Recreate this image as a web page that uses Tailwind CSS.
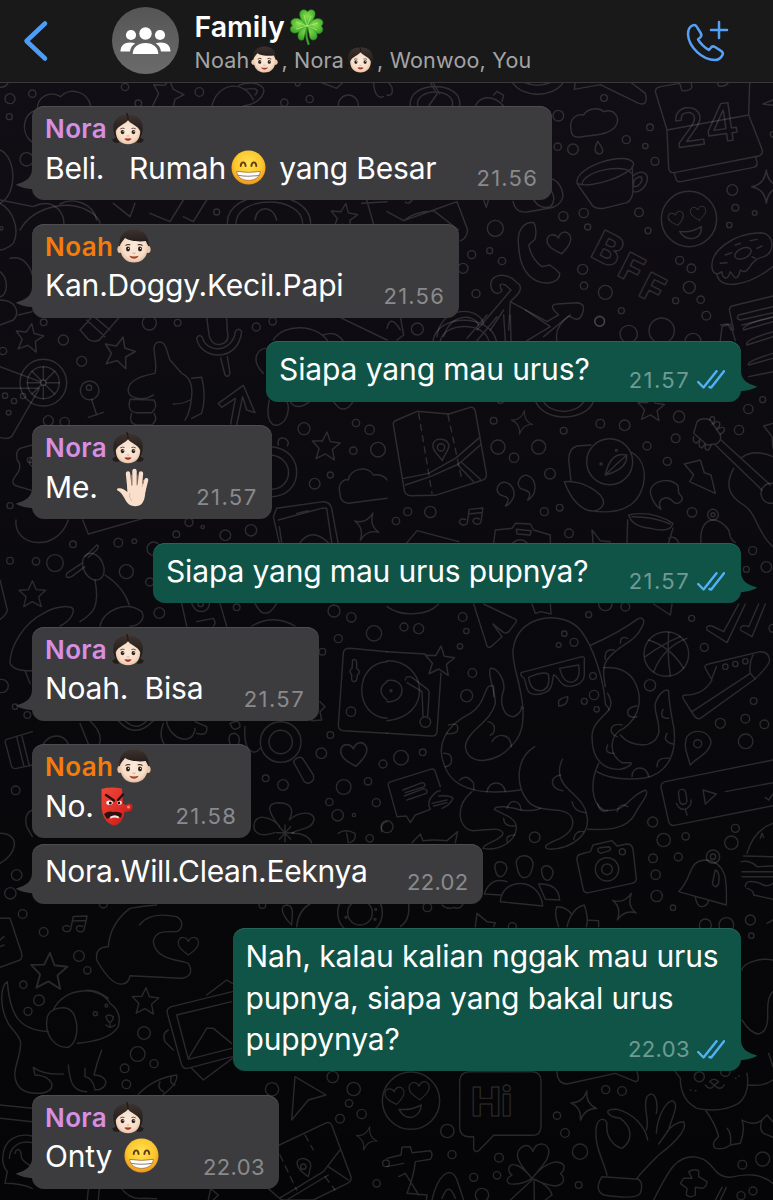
<!DOCTYPE html>
<html lang="id">
<head>
  <meta charset="UTF-8">
  <meta name="viewport" content="width=device-width, initial-scale=1.0">
  <title>Family</title>
  <script src="https://cdn.jsdelivr.net/npm/@tailwindcss/browser@4"></script>
</head>
<body class="bg-[#0b0a0e] font-['Inter',sans-serif] text-white">

<!-- shared shapes -->
<svg class="absolute w-0 h-0" aria-hidden="true">
  <defs>
    <radialGradient id="skin" cx=".5" cy=".45" r=".6">
      <stop offset="0" stop-color="#fdebdc"/><stop offset=".7" stop-color="#f7dcc6"/><stop offset="1" stop-color="#dcb496"/>
    </radialGradient>
    <linearGradient id="hair" x1="0" y1="0" x2="0" y2="1">
      <stop offset="0" stop-color="#3d332f"/><stop offset="1" stop-color="#1c1715"/>
    </linearGradient>
    <radialGradient id="yellow" cx=".5" cy=".4" r=".62">
      <stop offset="0" stop-color="#ffe454"/><stop offset=".65" stop-color="#fdc62d"/><stop offset="1" stop-color="#ee8d12"/>
    </radialGradient>
    <linearGradient id="red" x1="0" y1="0" x2="1" y2="1">
      <stop offset="0" stop-color="#f0493a"/><stop offset=".6" stop-color="#dc2a24"/><stop offset="1" stop-color="#a81a1a"/>
    </linearGradient>
    <radialGradient id="leaf" cx=".5" cy=".4" r=".7">
      <stop offset="0" stop-color="#8be04a"/><stop offset="1" stop-color="#2f9e27"/>
    </radialGradient>

    <symbol id="boy" viewBox="0 0 34 34">
      <ellipse cx="2.8" cy="20.5" rx="2.4" ry="3.4" fill="#ecc7ab"/>
      <ellipse cx="31.2" cy="20.5" rx="2.4" ry="3.4" fill="#ecc7ab"/>
      <path d="M3 17C3 7 9 3 17 3s14 4 14 14c0 10-5 16.500-14 16.500S3 27 3 17Z" fill="url(#skin)"/>
      <path d="M2.600 17C1.500 7 7 .5 17 .5S32.500 7 31.400 17c-1-1.500-1.800-3-2.600-5C22 13 12 12 8 9 6.500 11.500 4 13 2.600 17Z" fill="url(#hair)"/>
      <path d="M8.500 16.600q2.500-1.800 4.800-.5M20.700 16.100q2.300-1.300 4.800.5" stroke="#3a2c25" stroke-width="1.100" fill="none"/>
      <ellipse cx="11" cy="20" rx="2" ry="2.400" fill="#2b1f1a"/><ellipse cx="23" cy="20" rx="2" ry="2.400" fill="#2b1f1a"/>
      <circle cx="11.500" cy="19.300" r=".6" fill="#fff"/><circle cx="23.500" cy="19.300" r=".6" fill="#fff"/>
      <path d="M15.500 24q1.500.9 3 0" stroke="#d8a888" stroke-width="1" fill="none"/>
      <path d="M12.300 26.800q4.700 1.300 9.400 0-1.400 3-4.700 3t-4.700-3Z" fill="#a83f2c"/>
    </symbol>

    <symbol id="girl" viewBox="0 0 34 34">
      <path d="M6 22c-2 4-4 6-5.500 5.500C0 30 3 32.500 7.500 31.500ZM28 22c2 4 4 6 5.500 5.500C34 30 31 32.500 26.500 31.500Z" fill="#231c1a"/>
      <path d="M1.500 19C0 8 6 1.500 17 1.500S34 8 32.500 19q-.8 5-3 7.500H4.500q-2.200-2.500-3-7.500Z" fill="url(#hair)"/>
      <path d="M17 7.500c2.500 4.500 10.500 5.500 13 12 0 8.500-5 13.800-13 13.800S4 28 4 19.500C6.500 13 14.500 12 17 7.500Z" fill="url(#skin)"/>
      <path d="M15.500 0q1.800 2 1.500 8" stroke="#1b1513" stroke-width="1.200" fill="none"/>
      <path d="M8.800 16.900q2.300-1.400 4.500-.4M20.700 16.500q2.200-1 4.500.4" stroke="#4a372d" stroke-width=".9" fill="none"/>
      <ellipse cx="11.200" cy="20.300" rx="2" ry="2.300" fill="#2b1f1a"/><ellipse cx="22.800" cy="20.300" rx="2" ry="2.300" fill="#2b1f1a"/>
      <circle cx="11.800" cy="19.500" r=".6" fill="#fff"/><circle cx="23.400" cy="19.500" r=".6" fill="#fff"/>
      <path d="M15.700 24.200q1.300.8 2.600 0" stroke="#d8a888" stroke-width="1" fill="none"/>
      <path d="M13 27.400q2-1 4-.3 2-.7 4 .3-1.400 2.300-4 2.300t-4-2.300Z" fill="#a8362a"/>
    </symbol>

    <symbol id="grin" viewBox="0 0 36 36">
      <circle cx="18" cy="18" r="17.500" fill="url(#yellow)"/>
      <path d="M10 16.500c.3-5 4.700-5 5 0M21 16.500c.3-5 4.700-5 5 0" stroke="#6b3c12" stroke-width="2" stroke-linecap="round" fill="none"/>
      <path d="M5.800 22q12.200 2 24.400 0C29.800 27.500 25 31.300 18 31.300S6.200 27.500 5.800 22Z" fill="#fff" stroke="#a8743a" stroke-width=".9"/>
      <path d="M7 26q11 2 22 0" stroke="#8a7f76" stroke-width="1.100" fill="none"/>
    </symbol>

    <symbol id="hand" viewBox="0 0 33 39">
      <g stroke="#fae0cc" stroke-linecap="round" fill="none">
        <path d="M13.500 20 12 5.500" stroke-width="4.400"/>
        <path d="M18.500 20V3" stroke-width="4.400"/>
        <path d="M23.500 20 25 5.500" stroke-width="4.400"/>
        <path d="M27.500 23 30.300 12" stroke-width="4"/>
      </g>
      <path d="M11.300 18v6C8 21 5 19.500 1.500 20.500.5 21.500 1 22.500 2.500 23c4 2 6 8.500 9.500 12.500 3.500 3.500 11 3.500 14 0 3-4 3-8 3.600-14L27 16Z" fill="#fae0cc"/>
      <path d="M15.800 18V7M21 18V7M26 19l1.500-7M14 25q-2 4 2 8" stroke="#d9ab8c" stroke-width=".8" fill="none"/>
    </symbol>

    <symbol id="goblin" viewBox="0 0 33 39">
      <path d="M1.500 2Q11-.5 22 1.500L23 17l3 1c5-3 7 0 6.500 3s-4 4.500-8 3.500C24 32 20 38 13.500 38.500 7 36.500 2 30 1.500 20Z" fill="url(#red)"/>
      <path d="M6 8l8 5.500M23 7.500l-5 5.500" stroke="#2c0f0d" stroke-width="2.400" stroke-linecap="round"/>
      <ellipse cx="9.500" cy="15.800" rx="3.200" ry="2.200" fill="#fff"/><ellipse cx="19.500" cy="15.800" rx="2.300" ry="2" fill="#fff"/>
      <circle cx="10.300" cy="15.900" r="1.500" fill="#1b1010"/><circle cx="19" cy="15.900" r="1.300" fill="#1b1010"/>
      <path d="M4 27q5-3.500 9-2 5-1 9 1.500l-1 4q-8-3-14 1.500Z" fill="#2b1110"/>
      <path d="M10 29.800q5-3 9 0l-.4 1.700q-4.600-2-8 .2Z" fill="#f3e9e2"/>
      <circle cx="28.500" cy="20" r="1.500" fill="#ff8274"/>
    </symbol>

    <symbol id="clover" viewBox="0 0 34 36">
      <path d="M17 17q-2 10 1.500 18" stroke="#3c9a2c" stroke-width="2.200" stroke-linecap="round" fill="none"/>
      <g fill="url(#leaf)" stroke="#2f9527" stroke-width=".6">
        <path d="M17 17C11 12 9 7 10 3.500 12-.5 16 .5 17.500 3c2-3 7-3 7.500 1 .5 4-3 9-8 13Z"/>
        <path d="M17 17c4-6 9-8 13-7 4 1.500 3.500 5.500 1 7 3 2.500 2 7-2 7.500-4 0-9-3-12-7.500Z"/>
        <path d="M17 17c-4-6-8-8-12-7.500-4.500 1-5 5-2.500 7-3.500 2.500-2.500 7 1.500 7.500 4 0 9-2.500 13-7Z"/>
        <path d="M17 17c-6 2-9 6-9 10 0 4 3 5 5.500 3.500L17 17c3 8 2 12 4.500 13.500 3.500 1.500 6-1 5.500-4.500-.5-4-4-7-10-9Z"/>
      </g>
      <path d="M17 17 14 6M17 17l4-10M17 17 28 14M17 17l10 4M17 17 6 13M17 17 6 20" stroke="#b5f07c" stroke-width=".7"/>
    </symbol>

    <symbol id="ticks" viewBox="0 0 28 19">
      <path d="M1.200 12 6.500 17.500 19.500 1.200M12.500 17 14.200 17.500 27 1.200" fill="none" stroke="#53b0f6" stroke-width="2.400" stroke-linecap="round" stroke-linejoin="round"/>
    </symbol>
    <symbol id="tail" viewBox="0 0 27 31">
      <path d="M27 0H16C16 9 9 13 .6 15.200 0 15.500 0 16 .6 16.300 5 18.500 11 19.800 16.500 20.300 18 26 22 30 27 30.500Z"/>
    </symbol>

    <path id="star" d="M0-42 12-14 42-12 20 9 28 40 0 24-27 40-20 9-42-12-12-14Z"/>
    <path id="spark" d="M0-45Q5-6 40 0 5 6 0 45-5 6-40 0-5-6 0-45Z"/>
    <path id="heart" d="M0 32C-22 16-42 0-34-20-26-36-6-32 0-16 6-32 26-36 34-20 42 0 22 16 0 32Z"/>
    <path id="note" d="M-14 22V-18L26-28V14M-14-4 26-14M-14 22a12 9 0 1 1-6-8M26 14a12 9 0 1 1-6-8"/>
  </defs>
</svg>

<div class="relative w-[773px] h-[1200px] overflow-hidden">

  <!-- wallpaper -->
  <svg id="wallpaper" class="absolute inset-0 bg-linear-to-b from-[#120f16] via-[#0a090d] to-[#050507]" width="773" height="1200" viewBox="0 0 773 1200"
       fill="none" stroke="#fff" stroke-opacity=".14" stroke-width="4.300" stroke-linejoin="round" stroke-linecap="round">

    <g transform="scale(.33333)">
      <path d="M95 425C62 400 65 340 112 330 110 290 150 270 182 290 205 262 262 270 272 318"/>
      <path d="M458 318 476 280 461 254 494 256 508 240 520 268 552 284 525 298 520 318"/>
      <path d="M636 318C650 250 730 235 760 300M716 256C760 240 800 255 790 280 780 305 750 315 730 318M735 268C770 262 780 270 765 285"/>
      <path d="M0 450C48 470 55 580 0 610M0 600 100 620C160 590 200 640 190 680M180 612C220 590 280 610 290 660"/>
      <path d="M0 262Q20 262 25 246M960 246 1010 265 1030 246M1120 246Q1125 300 1150 290"/>
    </g>

    <g transform="translate(387 0) scale(.33333)">
      <path d="M0 285Q20 290 15 262L5 248M70 318C60 240 230 240 218 318M92 318C82 262 208 262 196 318M130 248 150 282 125 318M138 248 158 282"/>
      <path d="M265 318C280 285 320 285 350 318M320 285 330 274 350 286 345 304M375 246C405 295 500 295 530 246M410 246Q450 265 495 246"/>
      <path d="M565 246 562 268 640 254 755 310Q785 320 775 280L730 246"/>
      <path d="M552 388C545 355 570 340 590 345 600 325 635 320 650 335 680 325 700 350 688 375 670 410 600 405 575 412 560 412 552 405 552 388Z"/>
      <path d="M632 424Q615 458 636 462 660 460 632 424Z"/>
      <path d="M570 550C560 500 720 450 740 490 745 520 610 570 570 550L615 615Q625 628 650 625L720 608Q735 600 738 575L736 498M585 552C590 510 720 490 732 520M738 528C765 505 790 520 778 550 765 575 745 580 736 572M742 540Q765 520 765 540 755 565 738 558Z"/>
      <path d="M1088 246 1085 345 840 390 805 275Q805 262 820 260L878 250 885 272Q905 275 915 262L912 246M990 246 995 258Q1015 262 1025 246M840 390 845 505Q848 520 862 518L1115 468Q1130 462 1125 448L1085 345M862 520 868 540Q872 547 882 545L1100 502Q1112 498 1110 488L1106 470"/>
      <use href="#spark" transform="translate(1138 560) scale(1.100)"/>
      <path d="M1158 300 1128 312 1158 316"/>
      <circle cx="906" cy="657" r="83"/>
      <use href="#heart" transform="translate(868 656) rotate(-14) scale(.65)"/>
      <use href="#heart" transform="translate(934 640) rotate(-8) scale(.65)"/>
      <path d="M878 694Q910 700 943 680 945 712 915 716 890 716 878 694Z"/>
      <path d="M395 740C388 690 410 665 440 668 448 680 448 700 444 718L425 735C430 765 450 790 465 800L488 795Q505 805 518 820C520 845 485 855 455 845 415 830 398 790 395 740Z"/>
      <use href="#heart" transform="translate(518 730) rotate(-12)"/>
      <path d="M0 635 50 662 140 630 210 605 242 690Q240 715 220 722M50 662Q80 635 140 632L215 690M55 606Q65 615 75 600M290 600 298 622 304 600"/>
      <path d="M378 604Q385 640 420 636L485 625Q520 620 528 590 525 545 490 535M440 600Q460 630 490 620 510 600 492 570"/>
      <path d="M975 800C970 760 1030 700 1120 698 1165 700 1165 760 1130 770 1080 780 1090 830 1060 810 1050 850 1040 830 1030 815 1020 850 1005 830 1005 815 985 830 975 815 975 800ZM990 825C1000 870 1080 860 1158 800"/>
      <ellipse cx="1068" cy="760" rx="26" ry="15" transform="rotate(-25 1068 760)"/>
      <path d="M1015 765 1035 758M1000 790 1020 788M1045 735 1060 730M1090 722 1110 718M1110 745 1125 738M1095 770 1105 775"/>
      <path d="M315 870C300 830 340 815 375 835L398 855Q405 870 390 885L370 905 480 965 515 945 500 930Q490 912 510 912L570 908Q595 910 588 935 580 965 560 955L545 948 470 1010M315 870Q330 890 345 872 330 845 355 855L372 870 270 990M370 905 365 990M350 930 310 990"/>
      <path d="M150 1010C160 920 270 915 290 970M170 1010C190 940 260 940 275 975M0 985Q10 940 40 990"/>
      <path d="M1158 888 1035 918Q1025 922 1028 935L1040 990M1158 920 1055 945Q1045 955 1060 960L1158 938M1158 952 1065 975M1000 975 1022 972 1032 990"/>
    </g>

    <g transform="translate(0 200) scale(.33333)">
      <path d="M0 10C40 30 60 90 40 130 20 150 0 150 0 150M30 175C70 165 95 200 100 240M0 215C30 240 20 290 0 290M0 300C50 300 60 340 40 360L0 375M55 345 97 335"/>
      <path d="M60 90C100 20 200 0 260 30 300 50 300 70 300 70M340 10 390 50 405 10M450 40 510 65 550 0M550 50 580 65 620 0"/>
      <path d="M682 70C680-40 930-40 932 70M708 70C710-15 905-15 908 70M765 60C770 15 820 15 830 60"/>
      <use href="#star" transform="translate(1032 50) rotate(8) scale(.95)"/>
      <path d="M1100 0 1120 70M1085 10 1161 5"/>
      <path d="M240 390 275 352H330L358 352 300 418Q285 430 265 418ZM260 360 315 410M285 352 330 390"/>
      <use href="#star" transform="translate(88 412) rotate(10)"/>
      <use href="#star" transform="translate(358 456) rotate(14) scale(1.100)"/>
      <path d="M620 352 628 410Q640 440 665 432 690 425 682 395L680 352M590 415C600 480 715 490 725 395Q715 380 706 395C700 455 620 465 606 410Q595 402 590 415ZM662 474 675 525Q685 535 690 520L682 470"/>
      <path d="M465 520C475 480 450 440 470 428 500 415 500 460 510 480L545 520Q580 535 575 590 570 640 555 660M465 520Q380 535 385 575 390 600 440 595L460 585M390 600Q380 635 410 638H455Q475 620 462 600L390 598M395 640Q385 672 410 675H455Q475 660 462 640M575 535 605 532Q620 590 605 640L575 655M520 612Q550 612 570 600"/>
      <circle cx="130" cy="548" r="70"/><circle cx="130" cy="548" r="48"/><circle cx="130" cy="548" r="8"/>
      <path d="M130 500V540M130 556V596M82 548H122M138 548H178M96 514 124 542M136 554 164 582M164 514 136 542M124 554 96 582"/>
      <path d="M0 500 120 545M0 565H118L35 710Q20 720 0 712"/>
      <circle cx="269" cy="571" r="28"/><circle cx="267" cy="563" r="8"/><path d="M275 599 290 645M265 652 310 637"/>
      <path d="M655 610 730 556 765 638 740 630 728 590 710 675M655 610 665 622 706 595 692 672"/>
      <path d="M820 420C850 370 950 370 985 425M970 405Q1010 390 1030 425M790 520C750 480 770 440 810 445M808 600C795 660 815 680 835 675 865 665 870 620 860 604M870 604Q890 635 930 604M1000 604Q1030 650 1060 604M1020 352 1161 420"/>
      <use href="#star" transform="translate(978 738) rotate(4)"/>
      <path d="M815 740C920 750 910 890 815 890M815 765C885 775 880 865 815 868M835 735Q830 710 855 715 870 725 862 738"/>
      <path d="M1020 880C1010 850 1035 835 1045 840 1050 805 1105 795 1120 825 1150 820 1161 840 1161 840M1020 880Q1020 908 1045 910L1161 895"/>
      <path d="M820 950 830 925 970 905Q990 905 995 925L1020 1060M835 960 965 925 980 925 1000 1060M890 940 925 932M820 950 845 1060"/>
      <use href="#spark" transform="translate(1100 980) rotate(25)"/>
      <path d="M97 735 60 745Q45 755 52 780 70 800 45 830 30 850 50 858L97 872M97 770Q80 790 97 800"/>
    </g>

    <g transform="translate(387 320) scale(.33333)">
      <path d="M138 62C150-20 310-20 328 62M160 62C175 5 290 5 305 62M240 55 300-15M270 62 330-10M350-15 355 62M370-15 372 62M415-30 490 20 420 62M510 62Q500 20 550-15M30 60 50 45 40-10"/>
      <path d="M1000 62 1005 20 1030 12 1045 62M1158 5 1070 30Q1060 15 1158-10M1158 50 1080 75Q1070 60 1158 35M1158 115 1085 135Q1075 125 1158 100M1085 170 1158 155"/>
      <path d="M20 320Q15 305 30 300L90 274 185 282 250 262Q262 260 265 275L298 460Q300 475 288 480L145 526 70 527Q55 525 52 512ZM50 475 125 460 205 415 275 355M55 495 130 470 215 432 280 375M210 432 260 485M225 428 280 478"/>
      <path d="M95 280 135 520M183 285 225 480" stroke-dasharray="18 16"/>
      <path d="M166 422C150 400 135 390 138 372 145 352 180 352 186 376 186 392 170 405 166 422Z"/><circle cx="162" cy="382" r="11"/>
      <use href="#spark" transform="translate(405 307) rotate(12) scale(.8)"/>
      <path d="M445 242C470 310 600 305 620 242M468 242C490 285 570 285 592 242"/>
      <use href="#star" transform="translate(792 262) rotate(4) scale(.95)"/>
      <circle cx="668" cy="425" r="69"/>
      <path d="M735 398C790 430 780 520 730 555 700 575 660 580 610 572M612 375 570 378Q545 385 545 420L552 482M532 485C590 480 650 520 650 548 645 570 620 578 600 570 565 555 545 520 532 485ZM655 465Q670 395 718 405 725 445 655 465ZM655 465Q690 430 720 405"/>
      <path d="M355 558C375 530 355 530 340 525 320 510 335 485 355 487 380 492 385 520 378 535 370 550 360 558 355 558ZM422 540C440 512 415 512 400 505 385 490 400 465 420 466 450 475 445 510 440 522 432 535 425 540 422 540Z"/>
      <use href="#note" transform="translate(258 588) rotate(8)"/>
      <path d="M822 568C800 555 785 520 792 505 805 480 845 475 865 490 885 500 865 515 880 525 895 540 875 555 862 548 850 535 840 530 830 535 815 540 815 555 822 568Z"/>
      <path d="M892 432 940 420 952 458 972 465 985 520 908 485 920 465Z"/>
      <path d="M920 340 930 305Q945 290 970 300L1000 345Q1005 365 985 372L960 375ZM985 375 1125 510M1002 360 1150 495M1065 412Q1100 385 1158 410M1040 445C1010 500 1030 530 1070 555 1110 580 1110 640 1158 680"/>
      <path d="M968 300Q970 285 982 292 985 305 975 312M980 312Q990 300 998 308 1000 320 990 326M990 328Q1005 318 1012 325 1015 335 1000 342M920 350Q915 365 928 370L938 360M938 365Q932 380 945 384L954 372M955 375Q950 390 965 390L972 376"/>
      <circle cx="1152" cy="520" r="30"/>
      <path d="M1158 310 1130 318 1155 350 1158 385"/>
      <path d="M725 585Q795 570 858 610 850 640 790 625 735 620 725 585ZM735 590Q800 590 850 612M722 600 720 668M858 625 845 668M845 655Q865 645 875 668"/>
      <path d="M942 668C935 600 985 575 1025 630L1030 650Q1035 662 1045 668"/><circle cx="978" cy="584" r="16"/><circle cx="978" cy="584" r="6"/>
      <path d="M320 668 325 630 375 625 385 610 430 612 440 630 490 645V668M388 628 432 632 430 645 390 642ZM378 668Q400 650 420 668M60 668 90 632 215 665M618 668 615 630 640 662 670 665"/>
    </g>

    <g transform="translate(0 520) scale(.33333)">
      <path d="M48 0C40 80 170 100 205 0M248 0 265 42 430-5M845 68 838 20M900 68Q935 20 985 68"/>
      <ellipse cx="280" cy="140" rx="30" ry="42" transform="rotate(-25 280 140)"/>
      <path d="M255 110 290 75Q300 75 290 90L265 112M245 130 200 160Q195 178 215 170L255 140M285 180C300 260 280 280 240 305M315 165Q370 200 388 255M300 318C310 270 380 240 425 275 440 300 410 320 390 318M30 430C30 380 70 310 130 280 170 255 220 255 220 270 220 300 180 318 180 318M30 430Q40 455 96 452M75 452 90 490"/>
      <use href="#star" transform="translate(97 222) scale(.95)"/>
      <path d="M0 180 22 270Q20 285 0 298M545 250 560 318M660 250 680 318M575 250C590 290 630 275 628 250M590 305 640 295Q650 310 640 318M765 250Q795 310 830 250M755 318Q820 280 885 318"/>
      <path d="M1161 395 1050 385Q1030 385 1030 400L1015 615Q1015 630 1030 632L1161 640M1058 420Q1070 415 1070 430V445Q1085 455 1072 465L1070 480Q1060 490 1055 480L1055 465Q1045 450 1056 445Z"/>
      <path d="M1161 425C1060 430 1060 590 1161 595M1161 485Q1125 510 1161 540M960 545 975 560 960 575 965 600 935 602"/>
      <path d="M97 635 20 658Q12 662 18 675L35 740Q40 748 50 745L97 735M50 650 72 740M65 645 88 738M130 672C150 640 190 640 205 672M240 610 265 672M270 602Q310 640 298 672M355 602Q405 660 460 602M375 602Q410 635 440 602"/>
      <path d="M490 610C470 660 500 700 540 690M500 605C510 660 580 680 585 625M585 605 620 620Q625 650 590 640M690 610Q720 595 720 620 700 640 690 610M690 672Q680 640 705 640 725 650 715 672M735 620Q730 680 755 695 770 700 780 685"/>
      <circle cx="842" cy="666" r="61"/><circle cx="842" cy="666" r="35"/>
      <path d="M880 725Q895 705 908 715L940 765Q945 785 925 790 915 790 910 780Z"/>
      <use href="#heart" transform="translate(1063 704) rotate(-8) scale(1.100)"/>
      <path d="M835 915C800 870 800 848 838 848 880 850 880 875 868 900 900 870 945 875 942 900 935 930 895 925 875 940 905 938 928 950 935 968M838 918C810 888 765 880 762 915 760 945 790 950 825 938"/>
      <path d="M855 915V965M830 938H882M838 920 872 958M872 920 838 958"/>
      <path d="M1015 940Q1035 925 1065 940 1070 960 1050 968M1040 940 1045 968M1161 905Q1140 910 1145 935M97 870Q70 880 80 920L97 950M0 940C60 940 55 1000 0 1030"/>
    </g>

    <g transform="translate(387 600) scale(.33333)">
      <path d="M0 20C40 50 120 50 155 12M260 12 300 138Q305 145 312 140L345 110 318 72 350 98Q360 102 368 92L388 65Q390 58 380 55L290 12M435 12 445 40 462 35 492 42 490 12M800 12 850 45 855 12"/>
      <path d="M0 155 115 162M162 220 150 395Q148 410 132 408L0 400M0 182C120 180 140 350 0 362M0 242C60 230 60 310 0 305"/>
      <circle cx="12" cy="272" r="3"/>
      <use href="#star" transform="translate(158 182) rotate(5) scale(1.050)"/>
      <path d="M55 240Q55 225 75 232L122 268Q128 275 126 285L122 348M60 248 105 275 108 348"/><circle cx="115" cy="366" r="16"/>
      <path d="M408 325C400 240 375 200 378 150 390 40 530 30 580 90 620 140 650 240 655 310 655 320 668 320 665 330 650 350 615 370 615 410 615 480 650 510 700 508 720 505 740 490 730 488L705 488C660 460 670 400 710 385 760 350 770 290 740 240 720 210 690 200 650 203"/>
      <path d="M402 218 585 170Q595 172 592 180V225C590 255 550 265 530 255 515 245 510 225 500 225 495 235 500 265 480 275 450 290 425 285 420 265L412 235Q400 230 402 218ZM425 232Q480 210 485 225 490 265 465 272 430 275 425 232ZM518 205 575 195Q582 235 560 245 530 255 518 205ZM515 312Q510 295 542 290 545 315 515 318Z"/>
      <path d="M612 135C670 110 720 80 755 55 770 50 775 65 765 80 745 130 690 135 660 180 645 200 650 230 655 260"/>
      <path d="M408 325C410 370 405 410 370 440 330 490 240 500 235 440 240 390 310 370 325 310 325 270 300 225 310 205 330 200 355 240 350 270 335 310 350 350 380 350 395 345 405 330 403 320"/>
      <path d="M315 258C290 250 300 310 250 340 170 380 150 440 170 490 190 560 260 590 400 570M320 258V290"/>
      <path d="M443 440C380 480 390 560 420 600 440 630 490 628 520 632 570 640 570 690 520 715 480 730 460 745 490 748 560 745 610 700 600 650 595 590 520 570 518 520 515 500 525 480 527 478"/>
      <path d="M255 575C200 620 215 690 260 692 310 690 340 680 348 700 345 720 290 730 288 745 340 755 390 720 388 680 385 650 340 640 322 628 325 615 370 620 400 630Q440 635 460 625"/>
      <path d="M700 405C730 440 800 450 815 400 820 360 800 340 805 310 815 280 835 265 845 272 845 300 850 330 860 380 870 450 850 520 770 535 710 540 660 535 630 515M635 490C610 540 610 610 650 630 720 640 720 590 775 570 790 580 760 610 745 640 720 690 660 690 602 688"/>
      <path d="M185 375Q220 365 210 395 195 405 180 400M170 460Q200 460 192 490 185 500 175 500M218 540Q240 520 260 550V570M300 575C305 540 350 540 355 575M303 365C330 370 325 400 310 405M315 425C325 400 370 395 373 440M520 525C485 530 490 570 528 572M555 605Q560 635 595 638M560 718Q565 690 590 695M360 625C370 595 400 600 402 630M350 655Q350 680 383 678M360 725Q355 705 383 705M632 612Q640 640 662 632M690 635Q700 605 722 620M735 530C735 495 780 495 785 530M810 500Q810 470 845 475M858 432Q825 425 840 400M845 355Q815 355 828 328M750 350C715 360 710 320 750 318M690 410C660 400 670 365 705 375M680 460Q650 460 662 435M665 330Q680 310 662 280M655 178Q650 145 682 150M700 130Q700 105 722 115"/>
      <circle cx="838" cy="162" r="67"/>
      <path d="M785 120Q850 140 890 205M800 215Q830 140 900 115M775 170Q830 130 880 110M845 97Q840 160 850 228"/>
      <path d="M955 205Q950 195 965 192L1120 155Q1145 155 1148 180 1145 200 1100 240L940 355Q930 360 920 345L888 295Q885 285 895 285 950 285 975 240L955 205ZM915 335 1090 220 1105 238M1090 220Q1085 190 1098 165M975 235 988 200"/>
      <path d="M960 90 1020 128 1075 12M960 90Q955 75 975 78L1010 95 1055 12M1060 90 1095 110 1135 12M1060 85Q1065 72 1085 80L1115 12"/>
      <path d="M910 495C895 450 890 430 900 410 920 385 965 390 972 425 970 460 925 475 910 495Z"/><circle cx="932" cy="431" r="12"/>
      <path d="M1158 480 835 545Q820 550 822 562L845 665Q850 678 862 676L1158 617M1015 575 1158 548M948 570 988 582 955 612ZM1135 592 1145 600 1158 582"/>
      <rect x="876" y="568" width="22" height="45" rx="11" transform="rotate(-8 887 590)"/>
      <path d="M868 610Q878 635 900 625 915 615 912 600M895 628 900 645"/>
      <path d="M5 560Q0 548 12 545L130 508Q142 505 145 515L160 560M5 560 30 650 58 648 70 668 85 645 130 628M48 570 105 548Q118 550 112 560L55 578M52 588 110 566Q125 570 118 580L60 600M130 628Q115 600 150 575L160 572M135 610 180 600M155 588Q190 585 198 595 190 615 165 625M140 618 180 608"/>
      <path d="M75 728 100 702 108 722Q140 718 180 722L212 695 205 728"/>
      <path d="M340 905C345 830 460 830 467 918ZM390 800C375 760 440 755 438 795 430 845 395 845 390 800ZM325 810C315 775 360 780 360 805 350 840 330 835 325 810ZM465 820C455 790 500 790 498 820 490 850 470 845 465 820ZM340 885 292 882Q310 830 360 845M455 852Q515 850 518 900L475 898Z"/>
      <path d="M570 780Q568 765 582 762L610 755 618 735 675 722 690 738 720 732Q735 732 738 748L748 835Q748 848 735 850L605 878Q590 880 588 865ZM632 752Q630 745 640 743L665 740Q675 745 668 752L640 760Z"/>
      <circle cx="660" cy="808" r="35"/><circle cx="660" cy="808" r="16"/><circle cx="706" cy="755" r="9"/>
      <use href="#spark" transform="translate(712 920) rotate(28)"/>
      <path d="M875 875C920 830 900 780 960 780 1020 790 1020 840 1018 915ZM925 892Q930 920 945 920 960 918 965 902M985 810Q1000 815 995 850 985 870 976 850Z"/>
      <circle cx="978" cy="770" r="20"/><circle cx="978" cy="770" r="8"/>
      <path d="M1080 760Q1100 690 1158 670M1070 768 1158 770M1062 785Q1090 780 1110 800L1158 798M1065 815H1158M1065 830H1158M1075 860Q1075 835 1120 850 1140 865 1158 850M1080 865Q1100 870 1100 885L1158 898M1120 715 1125 700 1130 712"/>
      <path d="M65 912Q70 960 40 980M165 915Q180 930 200 922 220 930 228 912M265 980 270 940 300 965 325 968 320 980M515 980Q500 940 510 920 540 920 555 945M540 980C550 940 570 920 592 915 600 940 605 960 598 980M600 960 635 962V980M1140 970 1158 960"/>
    </g>

    <g transform="translate(0 830) scale(.33333)">
      <path d="M0 265 30 265 65 370Q68 385 60 390L0 412M0 330 12 320M0 350 12 345"/>
      <use href="#note" transform="translate(230 280) rotate(12)"/>
      <use href="#star" transform="translate(147 423) rotate(3) scale(1.300)"/>
      <use href="#star" transform="translate(436 513) rotate(3) scale(.95)"/>
      <path d="M418 285C440 255 480 250 530 260 555 275 545 300 530 305 500 305 465 300 460 335 465 390 540 390 565 400 580 425 570 445 540 445L390 437Q385 465 360 462 330 460 290 390 285 350 325 350 330 280 390 235 430 228 470 225 500 255M575 240C580 225 640 220 705 270M705 225Q760 250 775 295M575 240 560 270Q550 300 580 300C620 260 680 290 665 330 650 370 610 390 590 410 585 440 610 440 640 432Q680 415 697 400"/>
      <use href="#heart" transform="translate(565 348) scale(.85)"/>
      <path d="M875 285C840 250 840 225 862 225 885 230 875 260 875 285ZM890 290Q895 240 930 222"/>
      <circle cx="1080" cy="248" r="67"/><circle cx="1080" cy="248" r="37"/>
      <path d="M160 540C190 470 300 465 330 520 360 540 360 570 355 590 330 630 270 635 232 640M240 485Q280 470 325 505M142 560C150 535 200 520 220 550 240 590 230 640 205 652 170 655 130 620 142 560ZM145 605C60 600 30 560 22 455 0 470 0 530 20 570 30 600 60 610 62 640 60 690 40 710 45 740 50 780 80 790 110 790 140 790 160 780 155 760 145 740 120 735 105 735L100 712Q130 735 190 732M205 705C210 760 220 785 260 785M255 715V740Q280 745 285 780 315 780 318 755 310 735 282 735 290 700 305 660 305 630M190 732 210 730"/>
      <path d="M318 560Q325 550 340 560 340 570 330 578 320 572 318 560M330 578V590M318 585Q330 598 345 585"/>
      <circle cx="286" cy="551" r="6"/><circle cx="319" cy="527" r="4"/>
      <path d="M697 485 515 530Q498 535 502 550L545 705Q550 718 562 715L697 680M530 555 695 515M530 555 565 688 695 655M565 685 620 595 640 595 695 640M620 495 680 450 697 460M505 600Q485 610 495 635L520 660M575 715 610 750 697 685"/>
      <path d="M415 793Q460 745 530 735 535 760 490 793M480 755Q470 775 490 785M515 738Q505 760 525 765"/>
      <path d="M0 825 97 835M0 865 97 875M8 985C10 920 60 910 97 918M8 985Q8 1010 22 1025L15 1060Q60 1060 97 1075M28 985C30 945 65 930 97 938M45 970Q50 950 62 965L65 985Q75 1000 97 1010M265 1076 262 1110M298 1076 295 1110M365 1076Q390 1110 430 1105L470 1106M625 1110 632 1076 655 1095 640 1110"/>
      <path d="M885 740 978 795 925 810 875 870Z"/>
      <path d="M838 945 980 878Q990 875 995 885L1053 1040Q1055 1055 1042 1060L940 1110 860 1110Q840 1110 838 1105L805 1076M838 1105 970 1025 1020 960M860 1110 985 1035M985 1010 1045 1050"/>
      <path d="M840 975 890 1080M915 915 940 960M975 1040 1005 1080" stroke-dasharray="20 16"/>
      <path d="M925 1040C895 1020 885 1000 895 990 910 980 935 990 932 1010Z"/><circle cx="910" cy="1010" r="8"/>
      <use href="#spark" transform="translate(1100 925) rotate(15) scale(.8)"/>
    </g>

    <g transform="translate(387 900) scale(.33333)">
      <circle cx="72" cy="602" r="86"/>
      <use href="#heart" transform="translate(24 588) rotate(-10) scale(.8)"/>
      <use href="#heart" transform="translate(97 572) rotate(-4) scale(.85)"/>
      <path d="M36 628Q70 632 103 615 100 645 75 652 50 655 36 628Z"/>
      <path d="M245 515H435Q460 515 462 540V680Q460 708 435 706H320L275 752Q262 760 260 745V710H245Q220 708 218 685V540Q220 518 245 515Z"/>
      <path d="M510 515Q510 550 540 552L685 520 745 545Q760 545 750 515"/>
      <use href="#spark" transform="translate(590 617) rotate(12)"/>
      <path d="M660 825C650 780 620 740 628 680 635 650 655 655 660 670 655 710 680 740 705 745 740 720 735 680 700 655 660 650 645 625 690 628 740 640 775 680 782 720M778 690C790 660 765 620 780 590 800 565 815 600 808 640M808 700C810 660 830 610 855 602 880 610 855 650 845 690L815 732M840 695C850 680 870 665 890 665 905 690 850 740 815 765 780 800 760 820 750 835M645 830 755 838Q770 850 760 880 745 900 650 885 620 870 645 830Z"/>
      <path d="M865 515 880 535Q880 600 930 625 1000 640 1055 610 1090 580 1080 520M955 630Q985 670 995 710 970 730 985 745 1010 750 1030 735L1060 730Q1075 690 1065 660 1100 680 1125 660L1140 645 1158 665M1085 555Q1130 560 1158 540M1020 685Q1035 700 1030 735M1125 660Q1115 690 1130 700L1158 712M1158 180C1110 170 1065 195 1065 210M1065 360Q1090 400 1115 402 1145 395 1142 340 1140 290 1158 275"/>
      <circle cx="937" cy="530" r="15"/><circle cx="1015" cy="515" r="14"/>
      <path d="M968 545Q980 530 995 545L982 555ZM955 555Q970 575 982 555 1000 575 1012 555M910 570H912M925 572H927M1045 535H1047M1055 528H1057M1145 460 1158 500"/>
      <path d="M0 775 42 765 45 742 70 740 75 758 130 752Q140 765 130 778L85 785Q80 830 60 880L120 885 118 900M0 800 50 790M35 830 55 820 95 885"/>
      <path d="M435 835C395 790 380 765 400 745 420 725 435 745 438 755 445 725 480 725 485 750 490 780 450 815 435 835ZM435 835C470 790 510 775 530 795 535 815 520 820 520 820 540 840 525 855 505 858 480 855 455 845 435 835ZM435 835C400 790 370 785 365 805 365 820 375 825 375 825 350 840 360 855 385 852 410 850 425 842 435 835ZM370 900 435 840M441 840 442 900M445 838Q490 860 495 885L475 900"/>
      <path d="M800 900C850 800 870 770 920 770 990 780 970 830 1030 832 1080 820 1120 820 1158 850M890 835 915 835 905 815Q920 805 935 812L935 830 960 845Q960 860 945 865L925 862 925 885Q910 895 898 885L900 865 880 850ZM1005 862 985 900M1018 862 1000 900"/>
      <path d="M135 900C150 830 190 790 210 840L230 900M165 895Q185 840 205 895"/>
    </g>

    <!-- lettering inside the doodles -->
    <g stroke-width="1.400" font-family="Inter" font-weight="500">
      <text x="676" y="148" font-size="52" transform="rotate(-8 676 148)">24</text>
      <g font-weight="800" font-size="42">
        <text x="589" y="256" transform="rotate(27 589 256)">B</text>
        <text x="616" y="275" font-size="37" transform="rotate(27 616 275)">F</text>
        <text x="637" y="295" font-size="37" transform="rotate(27 637 295)">F</text>
      </g>
      <text x="471" y="1116" font-size="40" font-weight="800">Hi</text>
    </g>
  </svg>

  <!-- header -->
  <header class="relative flex h-[83px] border-b border-[#39383b] bg-[#191919]">
    <svg class="mt-[19px] ml-[22px] h-11 w-7" viewBox="0 0 28 44" fill="none" stroke="#4d9df8" stroke-width="4.500" stroke-linecap="round" stroke-linejoin="round">
      <path d="M23 4.500 4.500 22 23 39.500"/>
    </svg>
    <div class="mt-[7px] ml-[62px] flex size-[67px] shrink-0 items-center justify-center rounded-full bg-linear-to-b from-[#555] to-[#6b6b6b]">
      <svg class="h-7 w-[51px]" viewBox="0 0 51 28" fill="#fff">
        <circle cx="25.500" cy="6.500" r="6.200"/><circle cx="11" cy="8" r="5.100"/><circle cx="40" cy="8" r="5.100"/>
        <path d="M12.700 27C13 20 18 16 25.500 16S38 20 38.300 27Z"/>
        <path d="M.5 24.500C.5 18.500 4.500 15.500 10 15.500q3 0 5.300 1C12 18 10.500 21 10 24.500ZM50.500 24.500C50.500 18.500 46.500 15.500 41 15.500q-3 0-5.300 1C39 18 40.500 21 41 24.500Z"/>
      </svg>
    </div>
    <div class="ml-[15.5px]">
      <h1 class="mt-[9px] flex h-9 text-[28.5px] leading-9 font-semibold">Family<svg class="ml-[5px] h-9 w-[34px]"><use href="#clover"/></svg></h1>
      <p class="flex h-[30px] text-[21.5px] leading-[30px] tracking-[0.2px] whitespace-pre text-[#a4a4a6]"><span>Noah</span><svg class="mr-[3px] ml-[2px] mt-px size-[27px]"><use href="#boy"/></svg><span>, Nora</span><svg class="mx-[3px] mt-px size-[27px]"><use href="#girl"/></svg><span>, Wonwoo, You</span></p>
    </div>
    <svg class="mt-[19px] mr-[44px] ml-auto h-[45px] w-[44px]" viewBox="894 57 132 135" fill="none" stroke="#55a1f8" stroke-width="7.500" stroke-linecap="round" stroke-linejoin="round">
      <path d="M917 76C907 80 903 92 903 103 905 140 945 180 985 180 995 180 1003 172 1007 164 1009 159 1006 155 1001 152L984 141C979 138 974 139 971 144L966 150C955 145 938 128 933 118L940 112C944 108 944 104 941 99L929 80C926 75 921 74 917 76ZM996 66V114M972 90H1020"/>
    </svg>
  </header>

  <!-- messages -->
  <main class="relative flex flex-col items-start gap-[23.5px] px-8 pt-[23px] text-[30px] leading-[41.5px] tracking-[-0.2px]">

    <div class="relative flex h-[94px] w-[520px] items-end justify-between rounded-xl bg-[#3c3c3e] pr-3.5 pl-[13px] shadow-[inset_0_1px_0_#4d4d4f]">
      <svg class="absolute bottom-0 -left-4 h-[31px] w-[27px] fill-[#3c3c3e]"><use href="#tail"/></svg>
      <div class="relative h-full pt-1.5">
        <div class="flex h-[35.5px] text-[26px] leading-[33px] font-semibold tracking-[0.4px] text-[#d78fe2]">Nora<svg class="mt-px ml-[5px] size-8"><use href="#girl"/></svg></div>
        <p class="flex whitespace-pre"><span>Beli.   Rumah</span><svg class="mx-[5px] mt-[2px] size-[35px]"><use href="#grin"/></svg><span> yang Besar</span></p>
      </div>
      <time class="mb-2.5 text-[22px] leading-6 tracking-[1.2px] text-[#8a8a8d]">21.56</time>
    </div>

    <div class="relative flex h-[94px] w-[427px] items-end justify-between rounded-xl bg-[#3c3c3e] pr-3.5 pl-[13px] shadow-[inset_0_1px_0_#4d4d4f]">
      <svg class="absolute bottom-0 -left-4 h-[31px] w-[27px] fill-[#3c3c3e]"><use href="#tail"/></svg>
      <div class="relative h-full pt-1.5">
        <div class="flex h-[35.5px] text-[26px] leading-[33px] font-semibold tracking-[0.4px] text-[#f57c0a]">Noah<svg class="-mt-px ml-1 size-[34px]"><use href="#boy"/></svg></div>
        <p>Kan.Doggy.Kecil.Papi</p>
      </div>
      <time class="mb-2.5 text-[22px] leading-6 tracking-[1.2px] text-[#8a8a8d]">21.56</time>
    </div>

    <div class="relative flex h-[60.5px] w-[475px] items-end justify-between self-end rounded-xl bg-[#105448] pr-4 pl-[13px] shadow-[inset_0_1px_0_#256458]">
      <svg class="absolute -right-4 bottom-0 h-[31px] w-[27px] -scale-x-100 fill-[#105448]"><use href="#tail"/></svg>
      <p class="relative h-full pt-[7.5px] tracking-[-0.1px]">Siapa yang mau urus?</p>
      <div class="relative mb-2.5 flex items-center gap-[7px]">
        <time class="text-[22px] leading-6 tracking-[1.4px] text-[#6f9b92]">21.57</time>
        <svg class="h-[19px] w-7"><use href="#ticks"/></svg>
      </div>
    </div>

    <div class="relative flex h-[94px] w-[239.5px] items-end justify-between rounded-xl bg-[#3c3c3e] pr-3.5 pl-[13px] shadow-[inset_0_1px_0_#4d4d4f]">
      <svg class="absolute bottom-0 -left-4 h-[31px] w-[27px] fill-[#3c3c3e]"><use href="#tail"/></svg>
      <div class="relative h-full pt-1.5">
        <div class="flex h-[35.5px] text-[26px] leading-[33px] font-semibold tracking-[0.4px] text-[#d78fe2]">Nora<svg class="mt-px ml-[5px] size-8"><use href="#girl"/></svg></div>
        <p class="flex"><span>Me.</span><svg class="mt-px ml-[18px] h-[39px] w-[33px]"><use href="#hand"/></svg></p>
      </div>
      <time class="mb-2.5 text-[22px] leading-6 tracking-[1.4px] text-[#8a8a8d]">21.57</time>
    </div>

    <div class="relative flex h-[60.5px] w-[588px] items-end justify-between self-end rounded-xl bg-[#105448] pr-4 pl-[13px] shadow-[inset_0_1px_0_#256458]">
      <svg class="absolute -right-4 bottom-0 h-[31px] w-[27px] -scale-x-100 fill-[#105448]"><use href="#tail"/></svg>
      <p class="relative h-full pt-2 tracking-[-0.15px]">Siapa yang mau urus pupnya?</p>
      <div class="relative mb-2.5 flex items-center gap-[7px]">
        <time class="text-[22px] leading-6 tracking-[1.4px] text-[#6f9b92]">21.57</time>
        <svg class="h-[19px] w-7"><use href="#ticks"/></svg>
      </div>
    </div>

    <div class="relative flex h-[94px] w-[287px] items-end justify-between rounded-xl bg-[#3c3c3e] pr-3.5 pl-[13px] shadow-[inset_0_1px_0_#4d4d4f]">
      <svg class="absolute bottom-0 -left-4 h-[31px] w-[27px] fill-[#3c3c3e]"><use href="#tail"/></svg>
      <div class="relative h-full pt-1.5">
        <div class="flex h-[35.5px] text-[26px] leading-[33px] font-semibold tracking-[0.4px] text-[#d78fe2]">Nora<svg class="mt-px ml-[5px] size-8"><use href="#girl"/></svg></div>
        <p class="whitespace-pre">Noah.  Bisa</p>
      </div>
      <time class="mb-2.5 text-[22px] leading-6 tracking-[1.4px] text-[#8a8a8d]">21.57</time>
    </div>

    <div class="relative flex h-[94px] w-[219px] items-end justify-between rounded-xl bg-[#3c3c3e] pr-3.5 pl-[13px] shadow-[inset_0_1px_0_#4d4d4f]">
      <div class="h-full pt-1.5">
        <div class="flex h-[35.5px] text-[26px] leading-[33px] font-semibold tracking-[0.4px] text-[#f57c0a]">Noah<svg class="-mt-px ml-1 size-[34px]"><use href="#boy"/></svg></div>
        <p class="flex"><span>No.</span><svg class="mt-px ml-1.5 h-[39px] w-[33px]"><use href="#goblin"/></svg></p>
      </div>
      <time class="mb-2.5 text-[22px] leading-6 tracking-[1.2px] text-[#8a8a8d]">21.58</time>
    </div>

    <div class="relative -mt-[18px] flex h-[60.5px] w-[450.5px] items-end justify-between rounded-xl bg-[#3c3c3e] pr-3.5 pl-[13px] shadow-[inset_0_1px_0_#4d4d4f]">
      <svg class="absolute bottom-0 -left-4 h-[31px] w-[27px] fill-[#3c3c3e]"><use href="#tail"/></svg>
      <p class="relative h-full pt-[7.5px] tracking-[-0.3px]">Nora.Will.Clean.Eeknya</p>
      <time class="mb-2.5 text-[22px] leading-6 tracking-[0.3px] text-[#8a8a8d]">22.02</time>
    </div>

    <div class="relative flex h-[143.5px] w-[508.5px] items-end justify-between self-end rounded-xl bg-[#105448] pr-4 pl-[13px] shadow-[inset_0_1px_0_#256458]">
      <svg class="absolute -right-4 bottom-0 h-[31px] w-[27px] -scale-x-100 fill-[#105448]"><use href="#tail"/></svg>
      <p class="relative h-full w-0 pt-[8.5px] tracking-[-0.12px] whitespace-pre">Nah, kalau kalian nggak mau urus
pupnya, siapa yang bakal urus
puppynya?</p>
      <div class="relative mb-2.5 flex items-center gap-[7px]">
        <time class="text-[22px] leading-6 tracking-[0.4px] text-[#6f9b92]">22.03</time>
        <svg class="h-[19px] w-7"><use href="#ticks"/></svg>
      </div>
    </div>

    <div class="relative flex h-[94px] w-[247px] items-end justify-between rounded-xl bg-[#3c3c3e] pr-3.5 pl-[13px] shadow-[inset_0_1px_0_#4d4d4f]">
      <svg class="absolute bottom-0 -left-4 h-[31px] w-[27px] fill-[#3c3c3e]"><use href="#tail"/></svg>
      <div class="relative h-full pt-1.5">
        <div class="flex h-[35.5px] text-[26px] leading-[33px] font-semibold tracking-[0.4px] text-[#d78fe2]">Nora<svg class="mt-px ml-[5px] size-8"><use href="#girl"/></svg></div>
        <p class="flex"><span>Onty</span><svg class="mt-[2px] ml-3 size-[35px]"><use href="#grin"/></svg></p>
      </div>
      <time class="mb-2.5 text-[22px] leading-6 tracking-[0.4px] text-[#8a8a8d]">22.03</time>
    </div>
  </main>
</div>

<script>
  // small bubbles of the wallpaper: origin of each patch, then x, y, r in thirds of a pixel
  const patches = [
    [0, 0, [[30,296,15],[97,281,11],[28,350,9],[375,261,11],[598,276,13],[415,310,10],[853,308,11],[929,297,11],[80,478,20],[893,251,7],[1045,315,30]]],
    [387, 0, [[651,294,10],[514,347,16],[789,382,10],[718,419,12],[775,438,8],[512,440,11],[558,448,16],[804,484,12],[1036,570,16],[1045,623,10],[1103,639,7],[1027,675,8],[529,649,14],[590,639,14],[602,681,9],[756,637,13],[783,692,9],[325,685,24],[254,764,12],[308,752,9],[345,783,11],[228,805,15],[587,808,15],[591,857,11],[655,877,21],[267,881,12],[703,932,9],[638,963,15],[878,781,12],[913,805,13],[907,862,18],[941,899,11],[866,902,9],[958,947,13],[1158,403,8]]],
    [0, 200, [[650,36,9],[131,367,10],[448,369,21],[533,368,10],[190,420,15],[9,453,11],[245,484,15],[769,381,12],[818,364,11],[145,662,15],[194,666,14],[15,587,8],[42,603,8],[69,588,8],[26,638,7],[912,686,18],[1068,669,11],[1109,689,14],[1060,752,11],[1134,749,22],[991,825,9],[944,851,16],[30,917,9],[90,780,8],[567,967,12],[608,981,5],[4,85,5]]],
    [387, 320, [[91,27,18],[725,42,26],[824,32,38],[918,64,24],[638,5,14],[320,302,10],[530,332,10],[640,311,13],[713,316,16],[876,290,17],[866,355,13],[1084,267,14],[1127,239,9],[1056,330,14],[333,381,21],[455,381,21],[381,413,14],[780,378,12],[841,424,12],[489,461,16],[688,391,3],[642,432,3],[27,603,11],[62,575,12],[130,576,17],[472,575,12],[518,563,10],[546,640,13],[915,577,14],[1097,692,12],[1138,741,16],[1078,748,9],[340,240,10]]],
    [0, 520, [[529,43,10],[676,46,16],[753,31,17],[219,73,10],[355,68,13],[403,64,7],[30,122,10],[108,124,11],[165,129,25],[379,155,21],[449,186,12],[461,86,20],[478,279,16],[710,262,10],[602,252,8],[1002,273,18],[1054,292,14],[1122,340,23],[1015,356,12],[967,395,10],[5,498,20],[45,560,8],[82,585,10],[991,645,10],[964,700,16],[1149,732,12],[797,775,10],[849,795,16],[1104,784,11],[1031,801,22],[1129,848,12],[988,846,11],[1013,886,17],[1062,885,5],[1109,955,11],[47,811,13],[1053,575,14]]],
    [387, 600, [[51,81,12],[95,86,15],[227,51,13],[238,93,8],[219,139,8],[605,44,9],[655,12,20],[715,20,13],[914,55,9],[952,142,12],[256,219,13],[239,287,18],[789,256,17],[532,101,8],[515,135,7],[561,127,12],[618,228,10],[621,285,14],[592,304,9],[629,328,8],[42,473,22],[107,457,10],[1000,370,15],[1075,356,13],[1132,373,13],[1076,424,22],[1100,303,10],[443,712,16],[797,666,15],[830,720,20],[896,709,11],[1045,685,12],[1033,728,20],[798,775,13],[874,771,12],[806,824,14],[809,888,17],[858,923,8],[1090,960,15],[1018,975,22],[955,975,18],[121,922,13],[376,980,12],[0,680,18],[1158,85,12],[1015,200,8],[1045,192,8],[1075,184,8]]],
    [0, 830, [[50,135,16],[31,190,17],[68,252,13],[131,306,13],[237,378,16],[262,421,11],[70,464,11],[117,511,16],[84,544,12],[432,609,19],[413,672,22],[374,715,13],[462,701,12],[379,763,13],[816,778,20],[998,741,17],[1061,777,20],[1047,820,11],[1085,852,14],[1020,866,13],[1130,1060,11],[1158,1000,10],[310,222,12],[787,225,10],[1038,262,3],[1052,218,3],[1127,238,3],[1125,268,3]]],
    [387, 900, [[1093,107,8],[656,569,12],[705,573,13],[510,647,11],[534,699,13],[181,693,20],[195,764,12],[336,773,13],[260,832,12],[330,826,11],[285,885,20],[579,755,23],[575,855,10],[1066,794,13],[1127,777,21],[1098,873,12],[1062,887,12]]],
  ];
  const wallpaper = document.getElementById('wallpaper');
  for (const [ox, oy, dots] of patches) {
    for (const [x, y, r] of dots) {
      const c = document.createElementNS('http://www.w3.org/2000/svg', 'circle');
      c.setAttribute('cx', ox + x / 3);
      c.setAttribute('cy', oy + y / 3);
      c.setAttribute('r', r / 3);
      c.setAttribute('stroke-width', 1.4);
      wallpaper.appendChild(c);
    }
  }
</script>
</body>
</html>
